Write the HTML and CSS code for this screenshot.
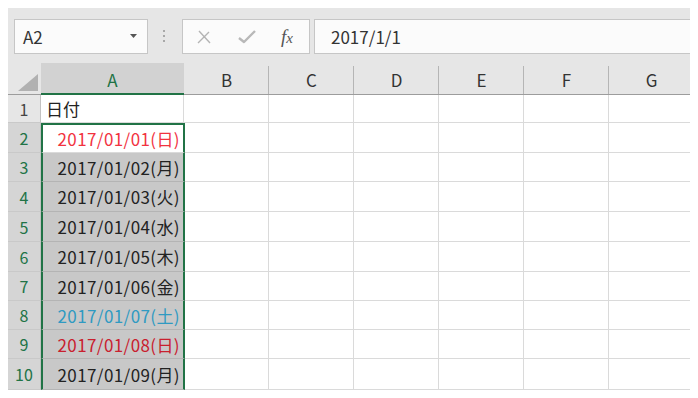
FILE: index.html
```html
<!DOCTYPE html>
<html lang="ja">
<head>
  <meta charset="UTF-8">
  <title>Sheet - 日付</title>
  <link rel="stylesheet" href="styles.css">
</head>
<body>
  <div class="sheet">
    <!-- Name box + formula bar -->
    <div class="formula-bar">
      <div class="name-box">
        <span>A2</span>
        <svg class="drop" width="7" height="4" viewBox="0 0 7 4"><polygon points="0,0 7,0 3.5,4" fill="#555"/></svg>
      </div>
      <div class="grip"><i></i><i></i><i></i></div>
      <div class="fx-box">
        <svg class="ico-cancel" width="14" height="14" viewBox="0 0 14 14">
          <path d="M2 1 L13 13 M12 2 L1 13" stroke="#b4b4b4" stroke-width="1.4" fill="none"/>
        </svg>
        <svg class="ico-enter" width="18" height="14" viewBox="0 0 18 14">
          <path d="M1 8 L6 12 L17 1" stroke="#b8b8b8" stroke-width="2.4" fill="none" stroke-linejoin="round"/>
        </svg>
        <span class="fx"><i>f</i><i class="x">x</i></span>
      </div>
      <div class="formula-input">2017/1/1</div>
    </div>

    <!-- Grid -->
    <div class="grid">
      <div class="corner">
        <svg width="20" height="17" viewBox="0 0 20 17"><polygon points="20,0 20,17 0,17" fill="#b1b1b1"/></svg>
      </div>
      <div class="col-head sel">A</div>
      <div class="col-head">B</div>
      <div class="col-head">C</div>
      <div class="col-head">D</div>
      <div class="col-head">E</div>
      <div class="col-head">F</div>
      <div class="col-head">G</div>

      <div class="row-head">1</div>
      <div class="cell">日付</div>
      <div class="cell"></div><div class="cell"></div><div class="cell"></div><div class="cell"></div><div class="cell"></div><div class="cell"></div>

      <div class="row-head sel">2</div>
      <div class="cell date range first red">2017/01/01(日)</div>
      <div class="cell"></div><div class="cell"></div><div class="cell"></div><div class="cell"></div><div class="cell"></div><div class="cell"></div>

      <div class="row-head sel">3</div>
      <div class="cell date range picked">2017/01/02(月)</div>
      <div class="cell"></div><div class="cell"></div><div class="cell"></div><div class="cell"></div><div class="cell"></div><div class="cell"></div>

      <div class="row-head sel">4</div>
      <div class="cell date range picked">2017/01/03(火)</div>
      <div class="cell"></div><div class="cell"></div><div class="cell"></div><div class="cell"></div><div class="cell"></div><div class="cell"></div>

      <div class="row-head sel">5</div>
      <div class="cell date range picked">2017/01/04(水)</div>
      <div class="cell"></div><div class="cell"></div><div class="cell"></div><div class="cell"></div><div class="cell"></div><div class="cell"></div>

      <div class="row-head sel">6</div>
      <div class="cell date range picked">2017/01/05(木)</div>
      <div class="cell"></div><div class="cell"></div><div class="cell"></div><div class="cell"></div><div class="cell"></div><div class="cell"></div>

      <div class="row-head sel">7</div>
      <div class="cell date range picked">2017/01/06(金)</div>
      <div class="cell"></div><div class="cell"></div><div class="cell"></div><div class="cell"></div><div class="cell"></div><div class="cell"></div>

      <div class="row-head sel">8</div>
      <div class="cell date range picked sat">2017/01/07(土)</div>
      <div class="cell"></div><div class="cell"></div><div class="cell"></div><div class="cell"></div><div class="cell"></div><div class="cell"></div>

      <div class="row-head sel">9</div>
      <div class="cell date range picked sun">2017/01/08(日)</div>
      <div class="cell"></div><div class="cell"></div><div class="cell"></div><div class="cell"></div><div class="cell"></div><div class="cell"></div>

      <div class="row-head sel">10</div>
      <div class="cell date range picked">2017/01/09(月)</div>
      <div class="cell"></div><div class="cell"></div><div class="cell"></div><div class="cell"></div><div class="cell"></div><div class="cell"></div>
    </div>
  </div>
</body>
</html>
```

FILE: styles.css
```css
/* Base */
body {
  margin: 8px;
  background: #ffffff;
  font-family: "Noto Sans CJK JP", "Noto Sans", sans-serif;
  color: #222222;
}

.sheet {
  height: 382px;
  overflow: hidden;
  background: #e6e6e6;
}

/* Formula bar */
.formula-bar {
  display: flex;
  align-items: flex-start;
  height: 55px;
  padding: 11px 0 0 6px;
  box-sizing: border-box;
  white-space: nowrap;
}
.name-box,
.fx-box,
.formula-input {
  flex: none;
  height: 35px;
  box-sizing: border-box;
  background: #fbfbfb;
  border: 1px solid #c6c6c6;
  display: flex;
  align-items: center;
}
.name-box {
  width: 134px;
  padding: 0 10px 0 8px;
  justify-content: space-between;
  font-size: 17px;
  color: #333333;
}
.name-box .drop {
  margin-top: -2px;
}
.grip {
  flex: none;
  display: flex;
  flex-direction: column;
  gap: 3px;
  margin: 11px 17px 0 15px;
}
.grip i {
  width: 2px;
  height: 2px;
  background: #a8a8a8;
}
.fx-box {
  width: 128px;
  padding-left: 14px;
}
.ico-enter {
  margin-left: 27px;
}
.fx {
  margin-left: 25px;
  font-family: "Liberation Serif", serif;
  font-size: 19px;
  color: #555555;
  line-height: 1;
}
.fx .x {
  font-size: 15px;
}
.formula-input {
  width: 420px;
  margin-left: 4px;
  padding-left: 16px;
  font-size: 17px;
  color: #333333;
}

/* Grid */
.grid {
  display: grid;
  grid-template-columns: 33px 143px repeat(6, 85px);
  grid-template-rows: 32px 28px 30px 29px 30px 30px 30px 29px 29px 29px 31px;
}
.corner {
  display: flex;
  justify-content: flex-end;
  align-items: flex-end;
  padding: 0 3px 3px 0;
  border-bottom: 1px solid #9c9c9c;
}
.col-head {
  display: flex;
  align-items: center;
  justify-content: center;
  padding-top: 2px;
  font-size: 17px;
  color: #333333;
  border-bottom: 1px solid #9c9c9c;
  background: linear-gradient(#b5b5b5, #b5b5b5) right bottom / 1px 28px no-repeat, #e6e6e6;
}
.col-head.sel {
  background: #d2d2d2;
  color: #217346;
  border-bottom: 2px solid #217346;
}
.row-head {
  display: flex;
  align-items: center;
  justify-content: center;
  font-size: 16px;
  color: #444444;
  background: #e6e6e6;
  border-bottom: 1px solid #c9c9c9;
  border-right: 1px solid #c2c2c2;
}
.row-head.sel {
  background: #d5d5d5;
  color: #217346;
}
.cell {
  display: flex;
  align-items: center;
  padding-left: 5px;
  font-size: 17px;
  background: #ffffff;
  border-right: 1px solid #dadada;
  border-bottom: 1px solid #dadada;
}
.cell.date {
  justify-content: flex-end;
  padding: 0 3px 0 0;
  letter-spacing: 0.4px;
}
.cell.picked {
  background: #c8c8c8;
  border-bottom-color: #b4b4b4;
}

/* selected range A2:A10 */
.cell.range {
  position: relative;
  z-index: 1;
  margin-right: -1px;
  border-left: 2px solid #217346;
  border-right: 2px solid #217346;
}
.cell.range.first {
  border-top: 2px solid #217346;
}
.red { color: #f2333f; }
.sat { color: #2f9ac2; }
.sun { color: #c9202e; }
```
